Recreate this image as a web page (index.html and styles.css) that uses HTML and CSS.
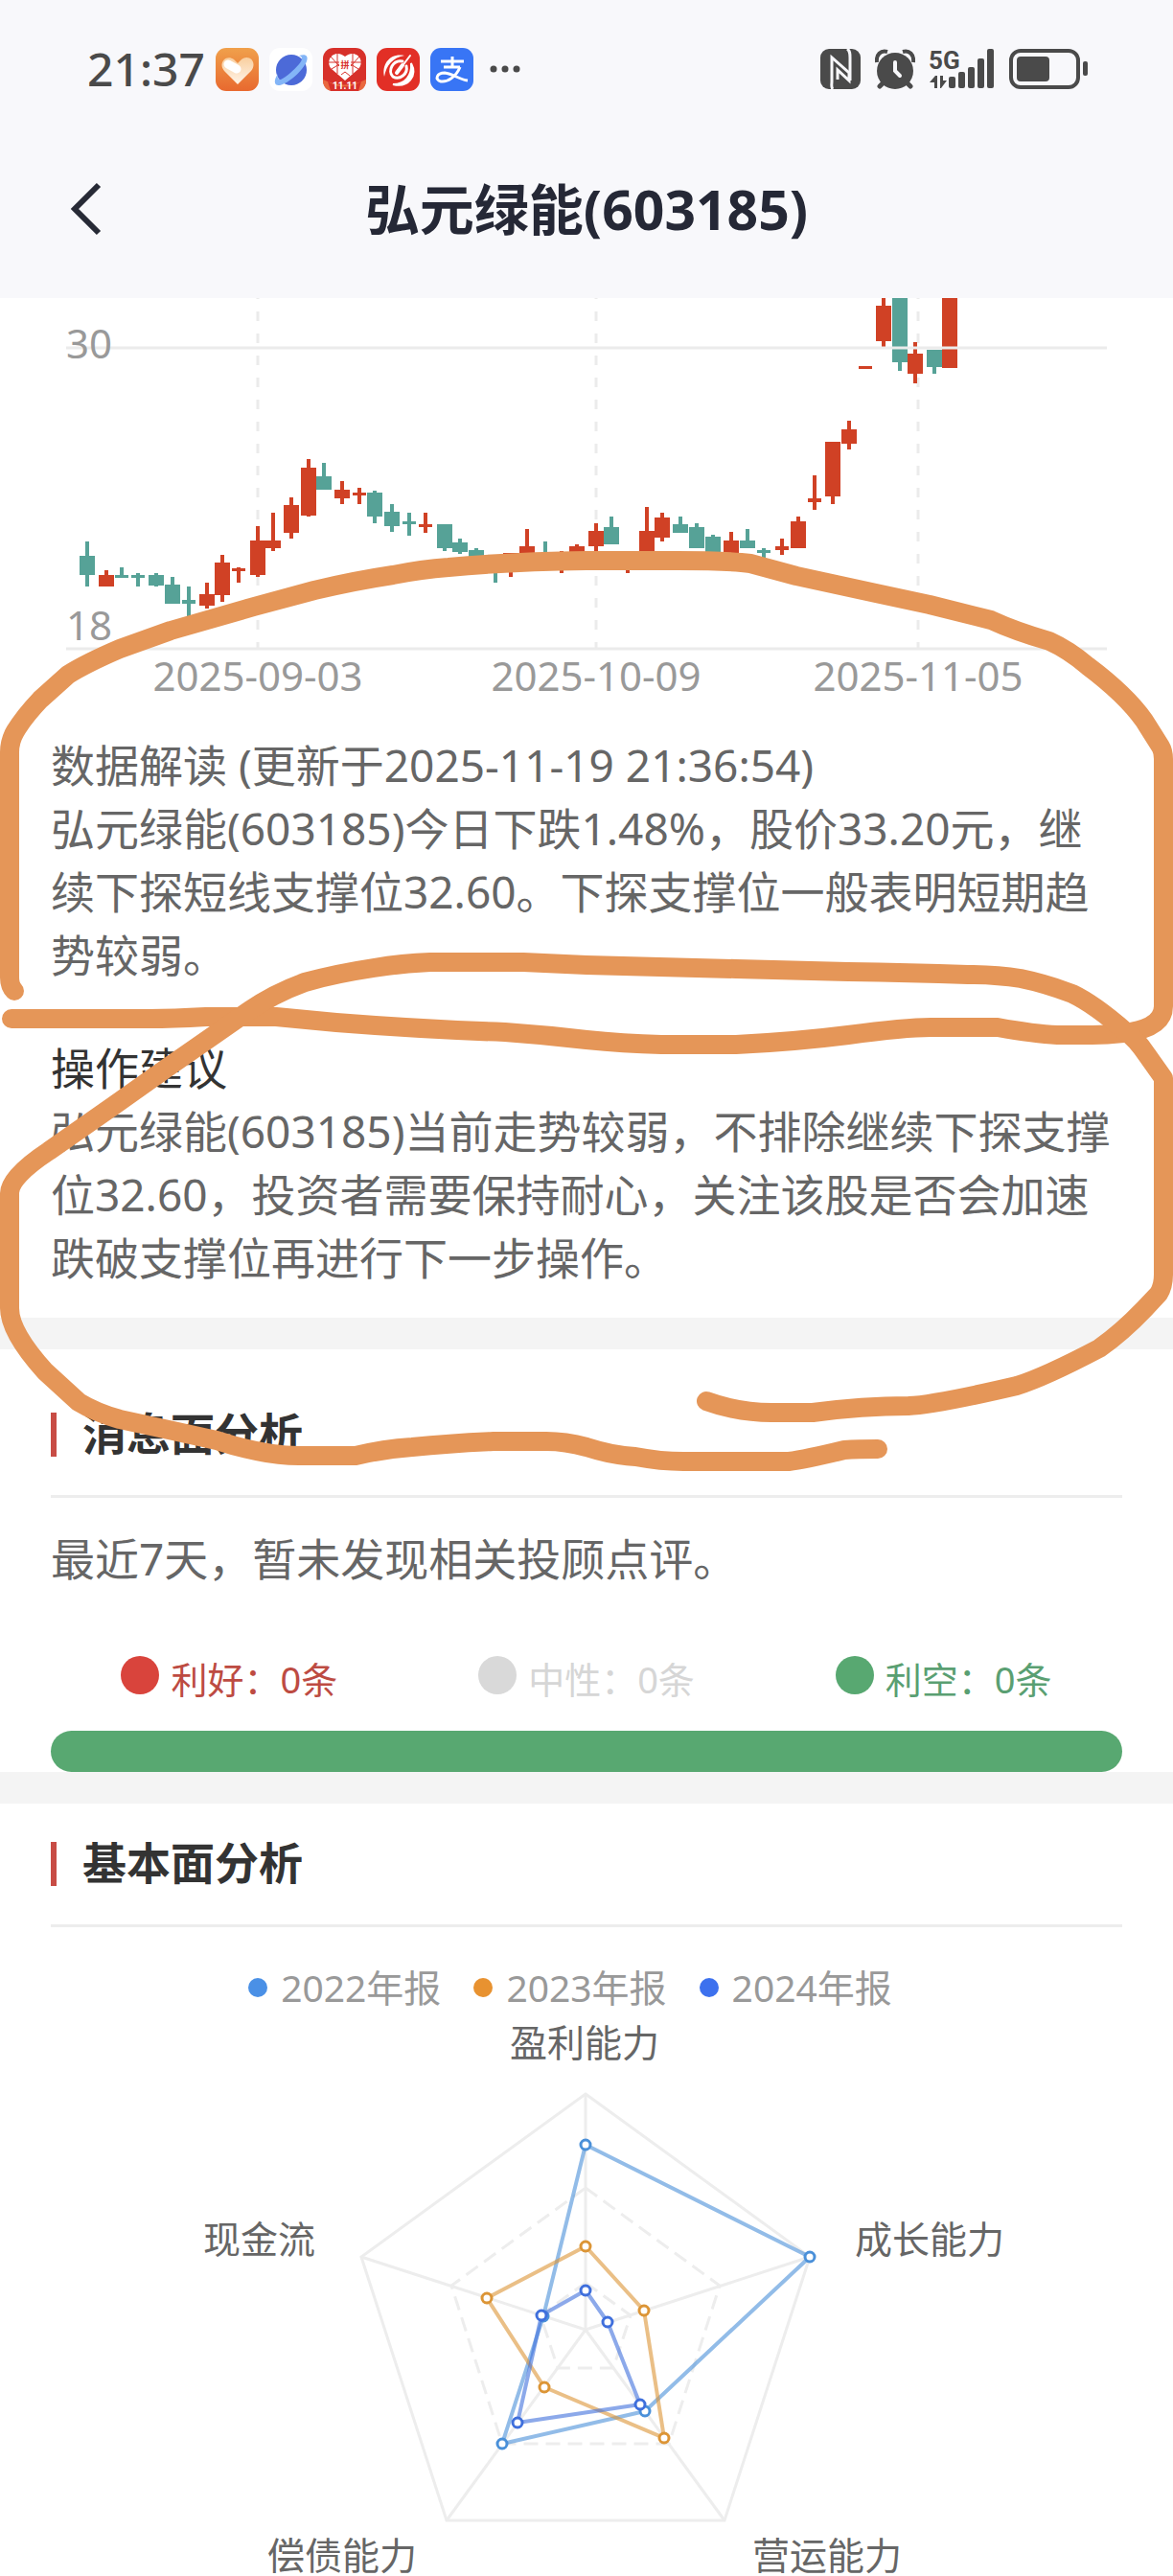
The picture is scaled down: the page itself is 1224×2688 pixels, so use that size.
FILE: index.html
```html
<!DOCTYPE html>
<html lang="zh-CN">

<head>
  <meta charset="UTF-8">
  <meta name="viewport" content="width=device-width, initial-scale=1">
  <title>弘元绿能(603185)</title>
  <link rel="stylesheet" href="styles.css">
</head>

<body>
  <div class="page">
    <header class="top">
      <div class="status-bar">
        <div class="status-left">
          <span class="time">21:37</span>
          <svg class="app-icon" viewBox="0 0 45 45">
            <defs>
              <linearGradient id="orange" x1="0" y1="0" x2="0" y2="1">
                <stop offset="0" stop-color="#f0a04b" />
                <stop offset="1" stop-color="#e8692f" />
              </linearGradient>
              <linearGradient id="heart" x1="0" y1="0" x2="0" y2="1">
                <stop offset="0" stop-color="#f9cf9f" />
                <stop offset="1" stop-color="#fff4e8" />
              </linearGradient>
            </defs>
            <rect width="45" height="45" rx="11" fill="url(#orange)" />
            <path d="M23 38L9 24C2 16 11 6 19 12L23 16L27 12C35 6 44 15 37 24Z" fill="url(#heart)" />
            <path d="M13 17L22 22" stroke="#fff" stroke-width="9" stroke-linecap="round" />
          </svg>
          <svg class="app-icon" viewBox="0 0 45 45">
            <rect width="45" height="45" rx="11" fill="#fff" />
            <circle cx="23" cy="23" r="16" fill="#4c6ad8" />
            <path d="M9 27C4 34 5 40 11 39C20 37 35 24 39 14C41 8 38 6 31 8C35 9 35 12 31 17C25 24 18 30 12 33C9 33 8 31 9 27Z" fill="#83b5f7" />
          </svg>
          <svg class="app-icon" viewBox="0 0 45 45">
            <rect width="45" height="45" rx="11" fill="#d7302a" />
            <path d="M0 33Q22 44 45 33Q45 45 34 45H11Q0 45 0 33Z" fill="#e9683f" />
            <path d="M5 35Q22 46 40 35L37 45H8Z" fill="#d7302a" />
            <path d="M23 34L9 22C1 13 12 0 23 9C34 0 45 13 37 22Z" fill="#fff" />
            <path d="M15 6V27M31 6V27M6 15H17M29 15H40M8 9L17 19M38 9L29 19M9 22L17 17M37 22L29 17M19 28L23 25L28 29" stroke="#d7302a" stroke-width="1" fill="none" />
            <text class="tiny-mark" x="23" y="21" fill="#d7302a">拼</text>
            <text class="tiny-label" x="23" y="43" fill="#fff">11.11</text>
          </svg>
          <svg class="app-icon" viewBox="0 0 45 45">
            <rect width="45" height="45" rx="11" fill="#e22f26" />
            <path d="M29 8C14 5 5 17 8 30C10 18 17 10 29 8Z" fill="#fff" />
            <path d="M36 16C43 29 33 42 17 38C30 38 37 29 36 16Z" fill="#fff" stroke="#fff" stroke-width="2" />
            <g fill="none" stroke="#fff" stroke-linecap="round">
              <path d="M27 14C17 12 11 24 17 30C24 34 33 27 31 19" stroke-width="3" />
              <path d="M35 8L26 20" stroke-width="2" />
              <path d="M27 18L21 26" stroke-width="4" />
            </g>
          </svg>
          <svg class="app-icon" viewBox="0 0 45 45">
            <rect width="45" height="45" rx="11" fill="#3875f5" />
            <g fill="none" stroke="#fff" stroke-width="3">
              <path d="M11 14H35M23 9V20M14 20H31" />
              <path d="M31 20C27 30 18 36 11 35C4 33 7 26 15 26C24 27 30 33 39 34" />
            </g>
          </svg>
          <svg class="more-dots" viewBox="0 0 32 8">
            <circle cx="4" cy="4" r="3.5" />
            <circle cx="16" cy="4" r="3.5" />
            <circle cx="28" cy="4" r="3.5" />
          </svg>
        </div>
        <div class="status-right">
          <svg width="42" height="42" viewBox="0 0 42 42">
            <rect width="42" height="42" rx="9" fill="#4a4a4a" />
            <path d="M13 42C11 40 12 37 12 34V9L30 25V33L18 22V32" fill="none" stroke="#f7f7fa" stroke-width="3" />
            <path d="M28 0C31 2 31 5 31 9V33" fill="none" stroke="#f7f7fa" stroke-width="3" />
          </svg>
          <svg width="42" height="42" viewBox="0 0 42 42">
            <path d="M10 34L5 39M32 34L37 39" stroke="#4a4a4a" stroke-width="5" stroke-linecap="round" />
            <path d="M2 14C1 6 6 1 13 3M40 14C41 6 36 1 29 3" fill="none" stroke="#4a4a4a" stroke-width="4" />
            <circle cx="21" cy="23" r="19" fill="#4a4a4a" />
            <path d="M21 14V23L26 28" fill="none" stroke="#f7f7fa" stroke-width="4" stroke-linecap="round" />
          </svg>
          <svg class="signal" width="68" height="44" viewBox="0 0 68 44">
            <text class="net-label" x="-1" y="22">5G</text>
            <path d="M5 30V42H8V29H6L0 36H5ZM11 29V42H12L18 34H14V29Z" />
            <rect x="20" y="30" width="7" height="12" rx="2" />
            <rect x="30" y="25" width="7" height="17" rx="2" />
            <rect x="40" y="20" width="7" height="22" rx="2" />
            <rect x="50" y="11" width="7" height="31" rx="2" />
            <rect x="60" y="1" width="7" height="41" rx="2" />
          </svg>
          <svg width="83" height="42" viewBox="0 0 83 42">
            <rect x="2" y="2" width="70" height="38" rx="10" fill="none" stroke="#4a4a4a" stroke-width="4" />
            <rect x="8" y="8" width="34" height="26" rx="4" fill="#4a4a4a" />
            <rect x="77" y="13" width="5" height="15" rx="2" fill="#4a4a4a" />
          </svg>
        </div>
      </div>

      <div class="nav-bar">
        <button class="back" type="button" aria-label="返回">
          <svg width="34" height="60" viewBox="0 0 34 60">
            <path d="M30 5L5 30L30 55" fill="none" stroke="#272a36" stroke-width="6" />
          </svg>
        </button>
        <h1>弘元绿能(603185)</h1>
      </div>
    </header>

    <main>
      <section class="trend">
        <svg class="kline" viewBox="0 311 1224 429">
          <g class="grid-dash">
            <path d="M269 302V677M622 302V677M958 302V677" />
          </g>
          <g id="candles"></g>
          <path class="grid-line" d="M69 363H1155M69 677H1155" />
          <g class="axis-text">
            <text x="69" y="374">30</text>
            <text x="69" y="668">18</text>
            <text class="mid" x="269" y="721">2025-09-03</text>
            <text class="mid" x="622" y="721">2025-10-09</text>
            <text class="mid" x="958" y="721">2025-11-05</text>
          </g>
        </svg>
        <div class="reading">
          <p>数据解读 (更新于2025-11-19 21:36:54)</p>
          <p>弘元绿能(603185)今日下跌1.48%，股价33.20元，继续下探短线支撑位32.60。下探支撑位一般表明短期趋势较弱。</p>
        </div>
        <div class="reading">
          <h3>操作建议</h3>
          <p>弘元绿能(603185)当前走势较弱，不排除继续下探支撑位32.60，投资者需要保持耐心，关注该股是否会加速跌破支撑位再进行下一步操作。</p>
        </div>
      </section>

      <section class="news">
        <h2>消息面分析</h2>
        <p class="news-text">最近7天，暂未发现相关投顾点评。</p>
        <div class="news-counts">
          <div class="count good"><i></i><span>利好：0条</span></div>
          <div class="count neutral"><i></i><span>中性：0条</span></div>
          <div class="count bad"><i></i><span>利空：0条</span></div>
        </div>
        <div class="news-bar"></div>
      </section>

      <section class="basics">
        <h2>基本面分析</h2>
        <div class="legend">
          <div class="legend-item y2022"><i></i>2022年报</div>
          <div class="legend-item y2023"><i></i>2023年报</div>
          <div class="legend-item y2024"><i></i>2024年报</div>
        </div>
        <svg class="radar" viewBox="-611 -327 1224 585">
          <g id="radar-grid"></g>
          <g id="radar-series"></g>
          <g class="radar-text">
            <text class="mid" x="-1" y="-285">盈利能力</text>
            <text x="281" y="-80">成长能力</text>
            <text x="174" y="250">营运能力</text>
            <text x="-332" y="250">偿债能力</text>
            <text x="-399" y="-80">现金流</text>
          </g>
        </svg>
      </section>
    </main>

    <!-- hand-drawn marker circles on top of the page -->
    <svg class="marker" viewBox="0 0 1224 2688">
      <path d="M15 1034Q10 1029 10 1020V785Q10 773 16 763Q25 748 42 730L71 704Q90 692 125 677L178 658L265 633L328 616Q370 606 410 600Q440 594 468 592Q530 586 612 585H707Q760 585 783 588L831 601L914 619L970 631L1034 647Q1060 659 1095 669Q1115 678 1135 695Q1175 725 1194 752L1211 779Q1214 784 1214 792V1050Q1214 1073 1172 1078Q1155 1080 1140 1080H1103Q1080 1079 1041 1072H971Q945 1072 885 1080Q830 1087 768 1090H690Q650 1089 612 1085Q570 1080 527 1077Q440 1074 351 1067L288 1061H215Q180 1063 156 1063H12" />
      <path d="M737 1462Q770 1474 805 1474H848Q900 1467 948 1467Q975 1466 1061 1446Q1090 1437 1147 1407Q1170 1391 1194 1366L1209 1350Q1214 1342 1214 1330V1125L1197 1101Q1185 1083 1174 1076Q1142 1048 1119 1037Q1090 1026 1065 1021Q1040 1017 1010 1017Q950 1015 885 1014L768 1011L612 1007L546 1004H449Q420 1005 390 1010Q350 1016 318 1025Q285 1037 258 1056L176 1113L121 1152L51 1201Q10 1228 10 1245V1365Q10 1390 47 1431L82 1463Q100 1474 125 1481L176 1492L226 1503Q275 1519 312 1519H371Q400 1512 430 1510Q470 1506 515 1504H570Q590 1504 612 1510Q640 1519 663 1520Q690 1525 713 1525H823Q840 1523 881 1513Q895 1512 916 1512" />
    </svg>
  </div>

  <script>
    const NS = 'http://www.w3.org/2000/svg';

    function draw(parent, tag, attrs) {
      const el = document.createElementNS(NS, tag);
      Object.keys(attrs).forEach(key => el.setAttribute(key, attrs[key]));
      parent.appendChild(el);
    }

    // [direction, x, body top, body bottom, wick top, wick bottom]
    const candles = [
      ['d', 91, 580, 600, 565, 612], ['u', 111, 600, 612, 595, 612], ['d', 127, 600, 603, 592, 603],
      ['d', 144, 600, 603, 598, 612], ['d', 163, 600, 611, 598, 612], ['d', 180, 610, 630, 602, 630],
      ['d', 197, 626, 630, 612, 645], ['u', 216, 620, 632, 608, 635], ['u', 232, 587, 621, 579, 628],
      ['u', 249, 593, 596, 592, 608], ['u', 269, 564, 600, 549, 602], ['u', 285, 564, 572, 535, 575],
      ['u', 304, 527, 556, 519, 562], ['u', 322, 488, 538, 479, 539], ['d', 338, 497, 511, 483, 511],
      ['u', 357, 511, 520, 502, 526], ['u', 375, 514, 517, 509, 526], ['d', 391, 514, 539, 512, 546],
      ['d', 409, 534, 549, 526, 555], ['d', 427, 544, 547, 535, 559], ['u', 444, 547, 550, 535, 556],
      ['d', 464, 547, 572, 547, 575], ['d', 480, 566, 576, 562, 578], ['d', 497, 574, 583, 572, 583],
      ['d', 517, 583, 593, 583, 608], ['u', 533, 577, 594, 577, 602], ['u', 550, 570, 582, 552, 582],
      ['d', 569, 580, 590, 565, 590], ['u', 586, 580, 592, 575, 598], ['u', 602, 570, 582, 568, 582],
      ['u', 622, 554, 570, 546, 575], ['d', 638, 550, 568, 539, 568], ['u', 655, 580, 592, 580, 598],
      ['u', 675, 554, 582, 529, 582], ['u', 691, 540, 561, 535, 565], ['d', 710, 547, 556, 539, 556],
      ['d', 727, 550, 572, 546, 572], ['d', 744, 560, 580, 558, 580], ['u', 763, 564, 580, 555, 580],
      ['d', 780, 564, 572, 552, 572], ['d', 797, 574, 577, 572, 590], ['u', 816, 570, 574, 562, 579],
      ['u', 833, 544, 572, 539, 572], ['u', 850, 520, 524, 496, 532], ['u', 869, 461, 518, 461, 526],
      ['u', 886, 448, 463, 439, 469], ['u', 903, 382, 385, 382, 385], ['u', 922, 319, 356, 300, 362],
      ['d', 939, 300, 378, 300, 387], ['u', 955, 369, 390, 357, 400], ['d', 975, 365, 383, 365, 390],
      ['u', 991, 300, 384, 300, 384]
    ];
    const candleBox = document.getElementById('candles');
    candles.forEach(([dir, x, top, bottom, high, low]) => {
      const cls = dir === 'u' ? 'candle-up' : 'candle-down';
      const half = bottom - top < 5 ? 7 : 8;
      draw(candleBox, 'rect', { class: cls, x: x - 2, y: high, width: 4, height: low - high });
      draw(candleBox, 'rect', { class: cls, x: x - half, y: top, width: half * 2, height: bottom - top });
    });

    // radar chart, values are 0..1 on every axis, clockwise from the top
    const R = 246;
    function point(value, i) {
      const a = Math.PI * 2 * i / 5;
      return [Math.round(Math.sin(a) * value * R), Math.round(-Math.cos(a) * value * R)];
    }

    const gridBox = document.getElementById('radar-grid');
    [1, 0.6, 0.2].forEach(ring => {
      const points = [0, 1, 2, 3, 4].map(i => point(ring, i)).join(' ');
      draw(gridBox, 'polygon', { class: ring === 1 ? 'ring' : 'ring dashed', points: points });
    });
    for (let i = 0; i < 5; i++) {
      const [x, y] = point(1, i);
      draw(gridBox, 'line', { class: 'ring', x1: 0, y1: 0, x2: x, y2: y });
    }

    const series = [
      { name: 'y2022', values: [0.785, 1, 0.427, 0.6, 0.19] },
      { name: 'y2023', values: [0.354, 0.26, 0.57, 0.3, 0.44] },
      { name: 'y2024', values: [0.167, 0.1, 0.394, 0.488, 0.195] }
    ];
    const seriesBox = document.getElementById('radar-series');
    series.forEach(s => {
      const pts = s.values.map(point);
      draw(seriesBox, 'polygon', { class: 'shape ' + s.name, points: pts.join(' ') });
      pts.forEach(([x, y]) => draw(seriesBox, 'circle', { class: 'node ' + s.name, cx: x, cy: y, r: 5 }));
    });
  </script>
</body>

</html>
```

FILE: styles.css
```css
* {
  box-sizing: border-box;
}

body {
  margin: 0;
  background: #fff;
  color: #666;
  font-family: "Noto Sans", "Noto Sans CJK SC", sans-serif;
  font-size: 46px;
  line-height: 66px;
}

h1,
h2,
h3,
p {
  margin: 0;
}

svg {
  display: block;
}

.page {
  position: relative;
  overflow: hidden;
}

/* header */
.top {
  background: #f8f8fb;
  color: #4a4a4a;
}

.status-bar {
  display: flex;
  justify-content: space-between;
  align-items: center;
  height: 144px;
  padding: 0 88px 0 91px;
}

.status-left {
  display: flex;
  align-items: center;
  gap: 11px;
}

.time {
  font-size: 48px;
  font-weight: 500;
}

.app-icon {
  width: 45px;
  height: 45px;
}

.more-dots {
  width: 32px;
  height: 8px;
  margin-left: 6px;
  fill: #4a4a4a;
}

.tiny-mark {
  font-size: 9px;
  font-weight: 700;
  text-anchor: middle;
}

.tiny-label {
  font-family: "Roboto", sans-serif;
  font-size: 10px;
  font-weight: 700;
  text-anchor: middle;
}

.signal {
  overflow: visible;
  fill: #4a4a4a;
}

.net-label {
  font-family: "Roboto", sans-serif;
  font-size: 26px;
  font-weight: 700;
}

.status-right {
  display: flex;
  align-items: center;
  gap: 15px;
}

.nav-bar {
  display: grid;
  grid-template-columns: 120px 1fr 120px;
  align-items: center;
  height: 167px;
  padding-bottom: 20px;
}

.back {
  justify-self: end;
  margin-right: 13px;
  padding: 0;
  border: none;
  background: none;
  cursor: pointer;
}

h1 {
  color: #252836;
  font-size: 57px;
  font-weight: 700;
  line-height: 80px;
  text-align: center;
}

/* candlestick chart */
.kline {
  width: 100%;
}

.grid-dash {
  fill: none;
  stroke: #ebebeb;
  stroke-width: 3;
  stroke-dasharray: 10 13;
}

.grid-line {
  fill: none;
  stroke: #ebebeb;
  stroke-width: 3;
}

.axis-text {
  fill: #999;
  font-size: 42px;
}

.mid {
  text-anchor: middle;
}

.candle-up {
  fill: #d04125;
}

.candle-down {
  fill: #56a297;
}

.trend {
  padding-bottom: 30px;
}

.reading {
  padding: 25px 53px 27px;
}

.reading + .reading {
  padding-bottom: 0;
}

.reading h3 {
  color: #333;
  font-size: 46px;
  font-weight: 400;
}

/* sections */
.news,
.basics {
  border-top: 33px solid #f4f4f4;
}

h2 {
  display: flex;
  align-items: center;
  gap: 27px;
  margin: 0 53px;
  padding: 36px 0 40px;
  border-bottom: 3px solid #ededed;
  color: #333;
  font-size: 46px;
  font-weight: 700;
  line-height: 46px;
}

h2::before {
  content: "";
  width: 6px;
  height: 46px;
  margin-top: 4px;
  background: #c84c45;
}

.news h2 {
  padding-top: 62px;
}

.news-text {
  padding: 30px 53px 34px;
}

.news-counts {
  display: flex;
  padding: 26px 53px 21px;
}

.count {
  flex: 1;
  display: flex;
  justify-content: center;
  align-items: center;
  gap: 12px;
  font-size: 38px;
}

.count i {
  width: 40px;
  height: 40px;
  margin-bottom: 8px;
  border-radius: 50%;
  background: #d9d9d9;
}

.good {
  color: #bd4b42;
}

.good i {
  background: #d9443c;
}

.neutral {
  color: #d6d6d6;
}

.bad {
  color: #5a9f72;
}

.bad i {
  background: #58a871;
}

.news-bar {
  height: 43px;
  margin: 0 53px;
  border-radius: 22px;
  background: #58a871;
}

/* radar chart */
.legend {
  display: flex;
  justify-content: center;
  padding-top: 32px;
  color: #999;
  font-size: 39px;
  line-height: 61px;
}

.legend-item {
  display: flex;
  align-items: center;
  gap: 14px;
  margin-right: 34px;
}

.legend-item i {
  width: 20px;
  height: 20px;
  border-radius: 50%;
}

.y2022 i {
  background: #4a90e6;
}

.y2023 i {
  background: #e89230;
}

.y2024 i {
  background: #3d71ee;
}

.radar {
  width: 100%;
  overflow: visible;
}

.radar-text {
  fill: #666;
  font-size: 39px;
}

.ring {
  fill: none;
  stroke: #ededed;
  stroke-width: 3;
}

.dashed {
  stroke-dasharray: 15 8;
}

.shape {
  fill: none;
  stroke-width: 4;
  stroke-linejoin: round;
  stroke-opacity: 0.6;
}

.node {
  fill: #fff;
  stroke-width: 3;
}

.shape.y2022,
.node.y2022 {
  stroke: #4a90d9;
}

.shape.y2023,
.node.y2023 {
  stroke: #dc9536;
}

.shape.y2024,
.node.y2024 {
  stroke: #3f6fdc;
}

/* marker strokes lie over everything */
.marker {
  position: absolute;
  top: 0;
  left: 0;
  width: 100%;
  pointer-events: none;
}

.marker path {
  fill: none;
  stroke: #e59658;
  stroke-width: 20;
  stroke-linecap: round;
  stroke-linejoin: round;
}
```
